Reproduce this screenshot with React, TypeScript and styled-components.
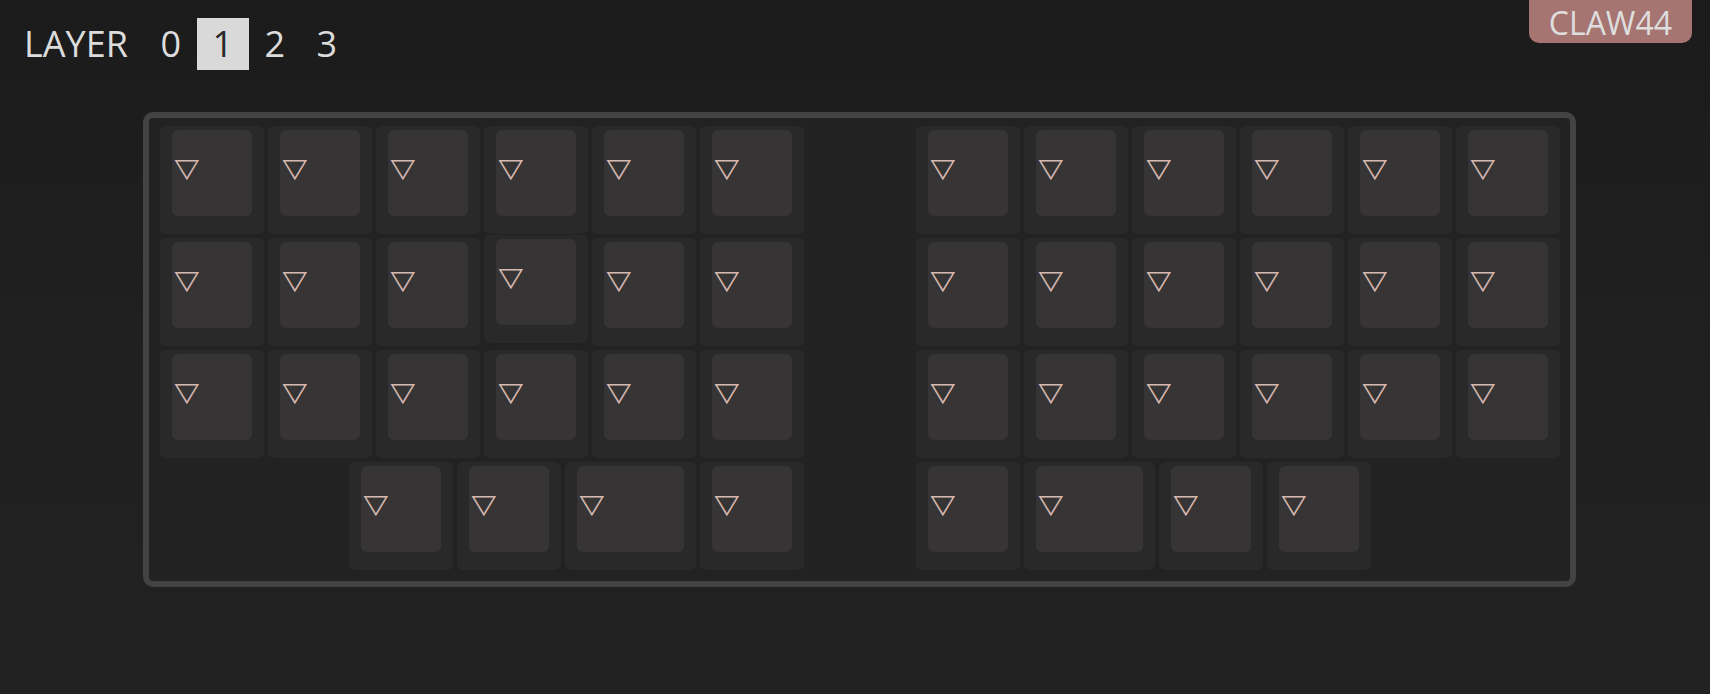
import React from "react";
import styled, { createGlobalStyle } from "styled-components";

const Global = createGlobalStyle`
  html, body { margin: 0; padding: 0; background: #1e1e1e; }
  body { font-family: "Open Sans", "Noto Sans", sans-serif; }
`;

const Page = styled.div`
  position: relative;
  min-height: 694px;
  box-sizing: border-box;
  padding: 18px 0 0 8px;
  background: linear-gradient(180deg, #1b1b1b 0%, #1f1f1f 40%, #222222 100%);
`;

const Header = styled.div`
  display: flex;
  align-items: center;
  height: 52px;
  padding-left: 16px;
  color: #dcdcdc;
  font-size: 36px;
  font-weight: 500;
`;

const LayerLabel = styled.span`
  margin-right: 17px;
  line-height: 1;
`;

const LayerButton = styled.span<{ $active?: boolean }>`
  display: flex;
  align-items: center;
  justify-content: center;
  width: 52px;
  height: 52px;
  line-height: 1;
  background: ${(p) => (p.$active ? "#d9d9d9" : "transparent")};
  color: ${(p) => (p.$active ? "#2a2a2a" : "#dcdcdc")};
`;

const Badge = styled.div`
  position: absolute;
  top: 0;
  right: 18px;
  height: 43px;
  padding: 2px 20px 0;
  box-sizing: border-box;
  display: flex;
  align-items: center;
  background: #a67471;
  color: #dedede;
  font-size: 32px;
  font-weight: 500;
  border-radius: 0 0 10px 10px;
`;

const Frame = styled.div`
  width: fit-content;
  margin: 42px auto 0;
  display: flex;
  gap: 112px;
  padding: 8px 10px 11px 11px;
  border: 6px solid #434343;
  border-radius: 10px;
  background: #222222;
`;

const Half = styled.div`
  display: flex;
  flex-direction: column;
  gap: 4px;
`;

const Row = styled.div<{ $align: "start" | "end" }>`
  display: flex;
  gap: 4px;
  justify-content: ${(p) => (p.$align === "end" ? "flex-end" : "flex-start")};
`;

const Key = styled.div<{ $w: number; $lifted?: boolean }>`
  box-sizing: border-box;
  width: ${(p) => Math.round(p.$w * 108 - 4)}px;
  height: 108px;
  padding: 4px 12px 18px 12px;
  background: #292929;
  border-radius: 6px;
  transform: translateY(${(p) => (p.$lifted ? -3 : 0)}px);
`;

const Cap = styled.div`
  height: 100%;
  box-sizing: border-box;
  padding: 25px 0 0 3px;
  background: #363435;
  border-radius: 6px;
`;

const Legend = styled.span`
  display: inline-block;
  font-family: "DejaVu Sans", sans-serif;
  font-size: 32px;
  line-height: 1;
  color: #d6b8ae;
  transform: scaleY(0.82);
  transform-origin: top left;
`;

type KeyDef = { w: number; lifted?: boolean };

const full = (): KeyDef[] => Array.from({ length: 6 }, () => ({ w: 1 }));

const leftRows: KeyDef[][] = [
  full(),
  [{ w: 1 }, { w: 1 }, { w: 1 }, { w: 1, lifted: true }, { w: 1 }, { w: 1 }],
  full(),
  [{ w: 1 }, { w: 1 }, { w: 1.25 }, { w: 1 }],
];

const rightRows: KeyDef[][] = [
  full(),
  full(),
  full(),
  [{ w: 1 }, { w: 1.25 }, { w: 1 }, { w: 1 }],
];

const KeyboardHalf: React.FC<{ rows: KeyDef[][]; align: "start" | "end" }> = ({ rows, align }) => (
  <Half>
    {rows.map((row, ri) => (
      <Row key={ri} $align={align}>
        {row.map((k, ki) => (
          <Key key={ki} $w={k.w} $lifted={k.lifted}>
            <Cap>
              <Legend>▽</Legend>
            </Cap>
          </Key>
        ))}
      </Row>
    ))}
  </Half>
);

export default function App() {
  return (
    <>
      <Global />
      <Page>
        <Header>
          <LayerLabel>LAYER</LayerLabel>
          {["0", "1", "2", "3"].map((d) => (
            <LayerButton key={d} $active={d === "1"}>
              {d}
            </LayerButton>
          ))}
        </Header>
        <Badge>CLAW44</Badge>
        <Frame>
          <KeyboardHalf rows={leftRows} align="end" />
          <KeyboardHalf rows={rightRows} align="start" />
        </Frame>
      </Page>
    </>
  );
}
